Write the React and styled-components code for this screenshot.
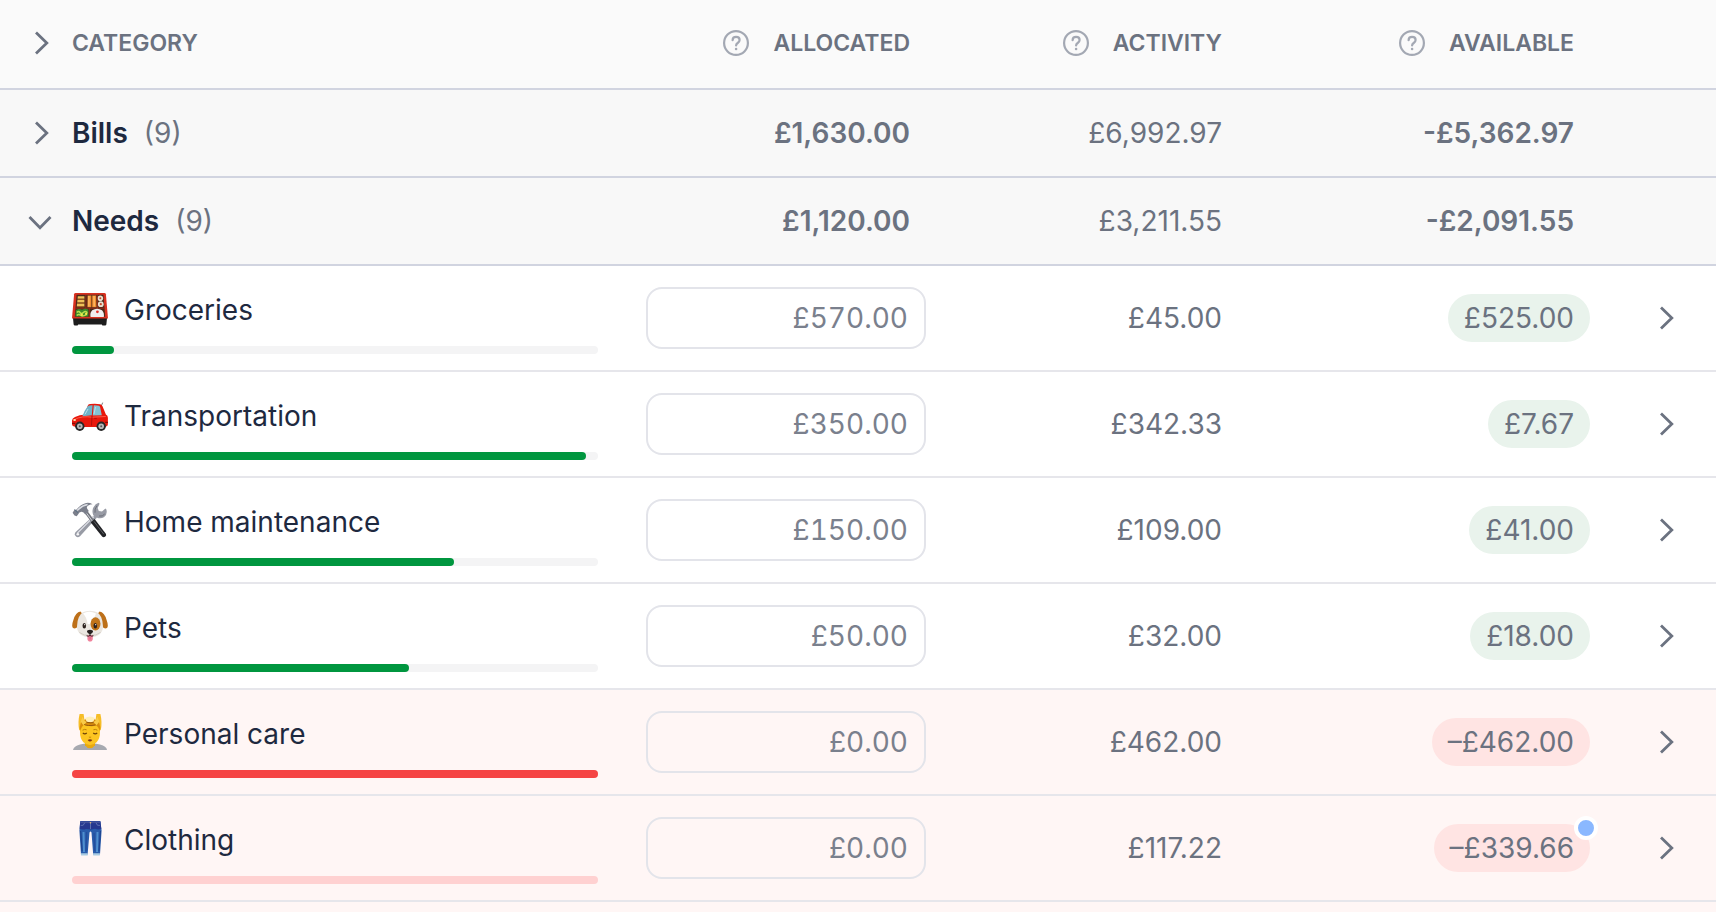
import React, { useState } from 'react'
import styled, { createGlobalStyle } from 'styled-components'

const groupData = [
    { id: 'bills', name: 'Bills', count: 9, allocated: '£1,630.00', activity: '£6,992.97', available: '-£5,362.97', items: [] },
    {
        id: 'needs', name: 'Needs', count: 9, allocated: '£1,120.00', activity: '£3,211.55', available: '-£2,091.55',
        items: [
            { name: 'Groceries', icon: 'bento', allocated: 570, activity: 45, available: 525 },
            { name: 'Transportation', icon: 'car', allocated: 350, activity: 342.33, available: 7.67 },
            { name: 'Home maintenance', icon: 'tools', allocated: 150, activity: 109, available: 41 },
            { name: 'Pets', icon: 'dog', allocated: 50, activity: 32, available: 18 },
            { name: 'Personal care', icon: 'massage', allocated: 0, activity: 462, available: -462, spent: 100 },
            { name: 'Clothing', icon: 'jeans', allocated: 0, activity: 117.22, available: -339.66, spent: 0, unread: true },
        ]
    },
]

const money = (value) => (value < 0 ? '–' : '') + '£' + Math.abs(value).toFixed(2)

const getSpent = (item) => item.spent !== undefined ? item.spent : (item.activity / item.allocated) * 100

function App() {

    const [ open, setOpen ] = useState({ bills: false, needs: true })
    const [ allOpen, setAllOpen ] = useState(false)

    const toggleGroup = (id) => {
        setOpen({ ...open, [id]: !open[id] })
    }

    const toggleAll = () => {
        setOpen({ bills: !allOpen, needs: !allOpen })
        setAllOpen(!allOpen)
    }

    return (
        <Page>
            <GlobalStyle />
            <Table>
                <colgroup>
                    <ToggleCol />
                    <col />
                    <AllocatedCol />
                    <ActivityCol />
                    <AvailableCol />
                    <DetailsCol />
                </colgroup>
                <thead>
                    <tr>
                        <HeadCell>
                            <ToggleButton aria-label="Toggle all groups" onClick={toggleAll}>
                                <Chevron $down={allOpen} />
                            </ToggleButton>
                        </HeadCell>
                        <HeadCell>CATEGORY</HeadCell>
                        <HeadCell $inset><HelpHeading label="ALLOCATED" /></HeadCell>
                        <HeadCell $gutter><HelpHeading label="ACTIVITY" /></HeadCell>
                        <HeadCell $inset><HelpHeading label="AVAILABLE" /></HeadCell>
                        <HeadCell />
                    </tr>
                </thead>
                {
                    groupData.map((group)=>(
                        <tbody key={group.id}>
                            <tr>
                                <GroupCell>
                                    <ToggleButton
                                        aria-label={'Toggle ' + group.name}
                                        aria-expanded={open[group.id]}
                                        onClick={()=>toggleGroup(group.id)}
                                    >
                                        <Chevron $down={open[group.id]} />
                                    </ToggleButton>
                                </GroupCell>
                                <GroupCell>
                                    <GroupTitle>
                                        <GroupName>{group.name}</GroupName>
                                        <span>({group.count})</span>
                                    </GroupTitle>
                                </GroupCell>
                                <GroupCell $inset $strong>{group.allocated}</GroupCell>
                                <GroupCell $gutter>{group.activity}</GroupCell>
                                <GroupCell $inset $strong>{group.available}</GroupCell>
                                <GroupCell />
                            </tr>
                            {
                                open[group.id] && group.items.map((item)=>(
                                    <CategoryRow key={item.name} item={item} />
                                ))
                            }
                        </tbody>
                    ))
                }
            </Table>
        </Page>
    )
}

export default App

function HelpHeading({ label }) {
    return (
        <Heading>
            <HelpButton aria-label={'About ' + label.toLowerCase()}>
                <svg width="26" height="26" viewBox="0 0 26 26" fill="none" stroke="currentColor" strokeWidth="2.2">
                    <circle cx="13" cy="13" r="11.9" />
                    <path d="M9.6 10.2c0-2 1.5-3.3 3.5-3.3s3.5 1.3 3.5 3.1c0 1.5-.8 2.2-1.9 3-1 .7-1.6 1.2-1.6 2.5" strokeLinecap="round" />
                    <circle cx="13.1" cy="19" r="1.3" fill="currentColor" stroke="none" />
                </svg>
            </HelpButton>
            {label}
        </Heading>
    )
}

function Chevron({ $down }) {
    return (
        <ChevronIcon $down={$down} viewBox="0 0 24 24">
            <path d="M8 1.5L18.8 12L8 22.5" />
        </ChevronIcon>
    )
}

function CategoryRow({ item }) {

    const over = item.available < 0
    const spent = getSpent(item)

    return (
        <ItemRow $over={over}>
            <ItemCell />
            <ItemCell $name>
                <CategoryTitle>
                    <CategoryIcon name={item.icon} />
                    {item.name}
                </CategoryTitle>
                <Track $over={over} role="progressbar" aria-label={item.name + ' spent'} aria-valuenow={Math.round(spent)}>
                    <Fill $over={over} style={{ width: spent + '%' }} />
                </Track>
            </ItemCell>
            <ItemCell $gutter>
                <AmountInput aria-label={item.name + ' allocated'} defaultValue={money(item.allocated)} />
            </ItemCell>
            <ItemCell $gutter>{money(item.activity)}</ItemCell>
            <ItemCell $gutter>
                <Pill $over={over}>
                    {money(item.available)}
                    {item.unread && <Dot />}
                </Pill>
            </ItemCell>
            <ItemCell $center>
                <DetailsButton aria-label={'Open ' + item.name}>
                    <Chevron />
                </DetailsButton>
            </ItemCell>
        </ItemRow>
    )
}

const icons = {
    bento: (
        <>
            <path d="M1 28h34l-.6 6.2q-.1 1.3-1.4 1.3h-2.6l-.6-1H6.2l-.6 1H3q-1.3 0-1.4-1.3z" fill="#1d1d1d" />
            <path d="M3.6 3h28.8q1.3 0 1.5 1.2L36 28.600H0L2.100 4.200Q2.300 3 3.600 3z" fill="#d8311f" />
            <path d="M4.600 4.800h26.800l1.800 22H2.800z" fill="#4a2a18" />
            <path d="M5.800 6.200h6.600v2.600H5.600zM5.500 9.800h6.900v2.800H5.200zM5 13.600h7.400v2.800H4.800z" fill="#efc25a" />
            <path d="M5.600 9.200h6.800M5.200 13h7.200M4.800 16.800h7.600" stroke="#a35a1c" strokeWidth=".9" />
            <path d="M15.600 5.600h3.800v11.600h-4zM20.200 5.600h3.900l.4 11.600h-4.300z" fill="#f28b2e" />
            <path d="M16.900 6v10.600M22 6l.2 10.600" stroke="#ffc16a" strokeWidth="1.300" />
            <circle cx="28.300" cy="8.200" r="2.800" fill="#e8e0cf" />
            <circle cx="28.800" cy="14.200" r="2.900" fill="#e8e0cf" />
            <circle cx="28.300" cy="8.200" r="1" fill="#c44628" />
            <circle cx="28.800" cy="14.200" r="1.100" fill="#c44628" />
            <path d="M13.900 5v13M25.100 5l.4 13M3.600 18.200h29M17.400 18.200v8.800" stroke="#9c2c1c" strokeWidth=".9" />
            <path d="M4 20l3-1.200 3 1 3.200-1.200 3.200 1v7H3.400z" fill="#3d8b28" />
            <path d="M4.800 22.500q2-2 3.200 0t3.400 0 4 .3M4.800 25.500q2-2 3.800-.2t5.800-.6" fill="none" stroke="#b8df4e" strokeWidth="1.500" />
            <circle cx="9.800" cy="24.800" r="1.200" fill="#f4e74c" />
            <circle cx="14.200" cy="23.800" r="1.200" fill="#f4e74c" />
            <path d="M18.600 27q-1-4 1.600-6.800 5-3 9.800 0 2.600 2.800 1.800 6.800z" fill="#f0eeee" />
            <circle cx="25.400" cy="21.800" r="1.400" fill="#e3322a" />
        </>
    ),
    car: (
        <>
            <path d="M29.3 10l1.4-3.4" stroke="#555" strokeWidth=".8" />
            <path d="M13.2 18.6L15.6 10q.6-1.7 2.4-1.9 5.4-.8 10.2.2 1.6.3 2.3 2l3.4 8.2q2 1 2 3.2v6.5q0 1.8-1.8 2.2L32 31H4l-2.6-.8Q0 29.8 0 28.2v-3.6q.2-2.4 3-3.7 4.4-2 10.2-2.3z" fill="#e8180c" />
            <path d="M10.4 20.2q2.2-6 5.2-9.6.8-1 2-1.1l3-.2-.8 10z" fill="#6fb3c8" />
            <path d="M21.8 9.3q3 0 5 .5 1 .2 1.3 1.2l1.7 8.2-9 .3z" fill="#83c3d4" />
            <path d="M13 18.4l3-5.4M22 18l1.5-7" stroke="#b8e1eb" strokeWidth="1" />
            <path d="M2.4 23.6q7-4 18-2.4l13.4-.7" fill="none" stroke="#ff5a48" strokeWidth="1" />
            <path d="M20 20l-.5 9.6M22.2 22.4h2.6" stroke="#a20e08" strokeWidth=".8" />
            <ellipse cx="2.6" cy="24" rx="1.4" ry="1.1" fill="#ffe2ae" />
            <path d="M0 27.4h3.4M33.2 26.4H36" stroke="#8b0c06" strokeWidth="1.3" />
            <circle cx="7.8" cy="30.2" r="4.7" fill="#272727" />
            <circle cx="29.2" cy="30.2" r="4.7" fill="#272727" />
            <circle cx="7.8" cy="30.2" r="2.8" fill="#b7b7b7" />
            <circle cx="29.2" cy="30.2" r="2.8" fill="#b7b7b7" />
            <circle cx="7.8" cy="30.2" r="1" fill="#555" />
            <circle cx="29.2" cy="30.2" r="1" fill="#555" />
        </>
    ),
    tools: (
        <>
            <path d="M22.6 12.8l2.4 2.6L8 34.2q-2.2 2-4.2.1t-.1-4.2z" fill="#989ba5" />
            <path d="M21.8 14.6L5.4 31.2" stroke="#e2e4ea" strokeWidth="1.2" />
            <circle cx="5.8" cy="32.2" r="1.3" fill="#f5f5f6" />
            <path d="M26.6.8l1 .9-2 4.2 1.2 3 3.2.7 3.4-3.1 1 1q1.3 5-2.5 7.7-3.2 2-6.7.5l-4-2.8q-1.6-4 .3-7.6Q23.4 1.6 26.6.8z" fill="#989ba5" />
            <path d="M23 10.7q-.6-3.7 2-7M27 14q3.7.8 5.6-2" fill="none" stroke="#6b6e78" strokeWidth="1" />
            <path d="M13 11.6l2.6-2.3 6.6 9-2.4 2.5z" fill="#74777f" />
            <path d="M14.6 11.3l5.6 7.6" stroke="#cfd2d8" strokeWidth="1" />
            <path d="M18.8 20.4l3.8-3.4L34 32q.7 1.600-.9 2.800-1.700 1-3-.2z" fill="#222326" />
            <path d="M22 19.400l9.800 12.800" stroke="#63656a" strokeWidth=".9" />
            <path d="M.6 10.8l2-3.200 1.700.2Q8.500 2.600 13.300 1.200q3.600-1 7.200 1-4.600.4-5.700 3 .4 2.200 2 3.700l-3.500 3.500q-2-3.100-4.600-2.400-2 .6-2.500 2.300l-1.500 1.900-2.200-.6z" fill="#7b7f8b" />
            <path d="M5.200 8.600Q10 3.600 15.600 2.600" fill="none" stroke="#dcdee4" strokeWidth="1.500" />
            <path d="M2.600 7.600l3.400 3.600" stroke="#5a7285" strokeWidth="1" />
        </>
    ),
    dog: (
        <>
            <path d="M8.500 3.600Q3.600 4.400 1.400 12-.8 18 1 20q2.400 1.400 4.600-1.200L12 8z" fill="#bd7019" />
            <path d="M27.500 3.600q4.900.8 7.100 8.400 2.200 6 .4 8-2.400 1.400-4.600-1.200L24 8z" fill="#bd7019" />
            <path d="M18 2.800q8.600 0 11.200 6.400 1.600 3.200 1.800 9.400 0 5.600-4.200 8.400Q23.400 29.300 18 29.300T9.200 27Q5 24.200 5 18.600q.2-6.200 1.800-9.400 2.600-6.400 11.200-6.400z" fill="#ebe7e1" />
            <path d="M11 5.600q6-3.600 13 0-2.200 3.800-3 10.400h-5.400Q14.600 9 11 5.600z" fill="#fff" />
            <ellipse cx="23.500" cy="15.800" rx="5" ry="6.600" fill="#c0741b" />
            <path d="M7.400 24.400Q12 28.400 18 27q6 1.400 10.600-2.600" fill="none" stroke="#d2ccc4" strokeWidth="1" />
            <ellipse cx="12.300" cy="17.800" rx="1.800" ry="2.800" fill="#2b211d" />
            <ellipse cx="23.300" cy="17.800" rx="1.800" ry="2.800" fill="#2b211d" />
            <circle cx="12.700" cy="16.700" r=".6" fill="#fff" />
            <circle cx="23.700" cy="16.700" r=".6" fill="#fff" />
            <path d="M15.400 27h5.400v3.800q-.2 2.800-2.700 2.800t-2.700-2.800z" fill="#f0809a" />
            <path d="M18.100 28v3.400" stroke="#d45c7c" strokeWidth=".8" />
            <path d="M15 23.500q0-1.700 3-1.700t3 1.700q0 1.400-3 3.100-3-1.700-3-3.100z" fill="#26201f" />
            <path d="M18 26v1.400M18 27.400q-1.800 1.500-3.400.3M18 27.400q1.800 1.500 3.400.3" fill="none" stroke="#26201f" strokeWidth=".9" />
        </>
    ),
    massage: (
        <>
            <path d="M1 36q.6-4 7-5.600l5-1h10l5 1q6.600 1.600 7 5.600z" fill="#a7a9b0" />
            <path d="M13 27h10v4.200q-2 3-5 3t-5-3z" fill="#e9a90f" />
            <path d="M7.600 0h4l1.200 8.500-5.600 8Q5.600 8 7.600 0zM28.400 0h-4l-1.200 8.500 5.600 8Q30.400 8 28.400 0z" fill="#f6bd27" />
            <path d="M8 17Q7.200 6.400 18 6t10 11q.2 7.500-3.400 11.200Q21.500 31 18 31t-6.600-2.800Q7.800 24.500 8 17z" fill="#fcc521" />
            <path d="M8 17Q6.600 7 14 5h8q7.400 2 6 12-2-4.400-3.600-5.400-6.400 1.600-12.600-.8Q9.600 12.600 8 17z" fill="#d88d0c" />
            <path d="M11 10q5 2.600 12.600.8M13 8q6 1.600 10 .4" fill="none" stroke="#95570c" strokeWidth="1" />
            <path d="M10.600 2.800q1 4 4 5.400l-3.300 3-2.600-3.600zM25.400 2.800q-1 4-4 5.400l3.300 3 2.600-3.600z" fill="#f9cb48" />
            <path d="M13 4q5-3 10 0l-1.600 3.400q-3.400 1-6.800 0z" fill="#fff0ba" />
            <path d="M10.600 16.200q2-1.400 4-.4M21.400 15.800q2-1 4 .4" fill="none" stroke="#b77a0a" strokeWidth=".9" />
            <path d="M10.800 19q2 1.800 4 0M21.200 19q2 1.800 4 0" fill="none" stroke="#6d4209" strokeWidth="1.100" />
            <path d="M16.900 23q1.100.8 2.200 0" fill="none" stroke="#c28908" strokeWidth=".9" />
            <path d="M15.700 26q2.300-1.500 4.600 0-2.300 3-4.600 0z" fill="#7d3516" />
        </>
    ),
    jeans: (
        <>
            <path d="M8.200 1.200h20.200l1.200 9.200-1.600 24.200h-6.800L19.500 12.500q-1-2-2 0L15.600 34.600H9L7.400 10.400z" fill="#2a5cab" />
            <path d="M8.200 1.200h20.200l.9 7.800q-3.300 1-6.300-.3l-3.600.9-5.400-.7Q10.600 10 7.700 8.700z" fill="#26388f" />
            <path d="M8.400 2.600h20" stroke="#47549c" strokeWidth="1" />
            <path d="M11.500 12l.5 20M25.500 12l-.5 20" stroke="#4f8fce" strokeWidth="2" />
            <path d="M8.600 11l1.500 20M28.500 11L27 31" stroke="#1d438e" strokeWidth="1" />
            <path d="M14.700 12L14 31M22 13l.7 18" stroke="#244f9d" strokeWidth="1.200" />
            <path d="M8.700 5.400q3 1 4-2.600M28 5.400q-3 1-4-2.600M18.500 3v6" fill="none" stroke="#7788bd" strokeWidth=".7" />
            <circle cx="18.500" cy="2.700" r=".8" fill="#dfba75" />
            <path d="M8.900 33.200h6.800v2.300H9.100zM21.100 33.200H28l-.2 2.300h-6.600z" fill="#a9cbe2" />
        </>
    ),
}

function CategoryIcon({ name }) {
    return <svg width="36" height="36" viewBox="0 0 36 36" aria-hidden="true">{icons[name]}</svg>
}

const GlobalStyle = createGlobalStyle`
    body {
        margin: 0;
        font-family: Inter, "Liberation Sans", sans-serif;
        font-size: 28px;
        color: #6b7280;
    }

    * {
        box-sizing: border-box;
    }
`

const Page = styled.main`
    min-height: 100vh;
    background: #fff6f5;
`

const Table = styled.table`
    width: 100%;
    table-layout: fixed;
    border-spacing: 0;
`

const ToggleCol = styled.col`
    width: 72px;
`

const AllocatedCol = styled.col`
    width: 328px;
`

const ActivityCol = styled.col`
    width: 296px;
`

const AvailableCol = styled.col`
    width: 368px;
`

const DetailsCol = styled.col`
    width: 102px;
`

const HeadCell = styled.th`
    height: 90px;
    padding: 0 ${props => props.$inset ? '40px' : props.$gutter ? '24px' : '0'} 2px 0;
    background: #fafafa;
    border-bottom: 2px solid #d1d4e0;
    font-size: 23px;
    font-weight: 600;
    text-align: left;
`

const Heading = styled.div`
    display: flex;
    align-items: center;
    justify-content: flex-end;
    gap: 24px;
`

const HelpButton = styled.button`
    display: flex;
    padding: 0;
    border: 0;
    background: none;
    color: #a3a8b3;
    cursor: pointer;
`

const ToggleButton = styled.button`
    display: flex;
    margin-left: 28px;
    padding: 0;
    border: 0;
    background: none;
    color: #6b7280;
    cursor: pointer;
`

const DetailsButton = styled(ToggleButton)`
    margin: 0 auto;
`

const ChevronIcon = styled.svg`
    width: 24px;
    height: 24px;
    fill: none;
    stroke: currentColor;
    stroke-width: 2.8;
    transform: ${props => props.$down ? 'rotate(90deg)' : 'none'};
`

const GroupCell = styled.td`
    height: 88px;
    padding: 0 ${props => props.$inset ? '40px' : props.$gutter ? '24px' : '0'} 0 0;
    background: #f8f8f8;
    border-bottom: 2px solid #d1d4e0;
    font-weight: ${props => props.$strong ? 600 : 400};
    text-align: right;
`

const GroupTitle = styled.div`
    display: flex;
    gap: 16px;
`

const GroupName = styled.span`
    font-weight: 600;
    color: #1e293f;
`

const ItemRow = styled.tr`
    background: ${props => props.$over ? '#fff6f5' : '#ffffff'};
`

const ItemCell = styled.td`
    height: 106px;
    padding: ${props => props.$name ? '24px 24px 16px 0' : props.$gutter ? '0 24px' : '0'};
    border-bottom: 2px solid #e6e6eb;
    text-align: ${props => props.$name ? 'left' : props.$center ? 'center' : 'right'};
`

const CategoryTitle = styled.div`
    display: flex;
    align-items: flex-start;
    gap: 16px;
    margin-bottom: 16px;
    line-height: 40px;
    color: #1e293f;
`

const Track = styled.div`
    height: 8px;
    border-radius: 4px;
    background: ${props => props.$over ? '#ffd1d1' : '#f4f4f5'};
`

const Fill = styled.div`
    height: 8px;
    border-radius: 4px;
    background: ${props => props.$over ? '#f54444' : '#00963f'};
`

const AmountInput = styled.input`
    display: block;
    width: 100%;
    height: 62px;
    padding: 0 16px;
    border: 2px solid #e3e4ea;
    border-radius: 16px;
    background: transparent;
    font: inherit;
    font-variant-numeric: tabular-nums;  //amounts line up from row to row
    color: #7a808d;
    text-align: right;
`

const Pill = styled.span`
    position: relative;  //so the dot can sit on the corner
    display: inline-block;
    padding: 0 16px;
    border-radius: 24px;
    line-height: 48px;
    vertical-align: middle;
    background: ${props => props.$over ? '#ffe4e3' : '#e9f3ec'};
`

const Dot = styled.span`
    position: absolute;
    top: -8px;
    right: -8px;
    width: 24px;
    height: 24px;
    border: 4px solid #ffffff;
    border-radius: 50%;
    background: #8ab8ff;
`
